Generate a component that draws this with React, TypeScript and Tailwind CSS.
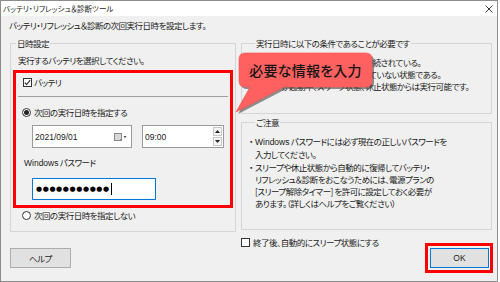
import React from "react";

const jp = "font-['Meiryo_UI','Noto_Sans_CJK_JP',sans-serif] [font-feature-settings:'palt']";
const latin = "font-['Liberation_Sans',Arial,sans-serif] tracking-normal";

function CheckBox({ checked }: { checked?: boolean }) {
  return (
    <span className="w-[9px] h-[9px] border border-[#333] bg-white flex items-center justify-center shrink-0">
      {checked && (
        <svg width="7" height="7" viewBox="0 0 7 7">
          <path d="M0.8 3.6 L2.7 5.5 L6.2 1.2" fill="none" stroke="#222" strokeWidth="1.1" />
        </svg>
      )}
    </span>
  );
}

function Radio({ checked }: { checked?: boolean }) {
  return (
    <span className="w-[9px] h-[9px] rounded-full border border-[#333] bg-white flex items-center justify-center shrink-0">
      {checked && <span className="w-[5px] h-[5px] rounded-full bg-[#222]" />}
    </span>
  );
}

function Callout() {
  const d =
    "M11,3 H132 Q138,3 138,9 V31 Q138,37 132,37 H50 L2,62 L16,37 H11 Q5,37 5,31 V9 Q5,3 11,3 Z";
  return (
    <div className="absolute left-[234px] top-[50px] w-[142px] h-[66px]">
      <svg width="142" height="66" viewBox="0 0 142 66" className="absolute inset-0">
        <path d={d} fill="#3a3a3a" opacity="0.55" transform="translate(2,2)" />
        <path d={d} fill="#ff6161" stroke="#f25252" strokeWidth="0.6" />
      </svg>
      <div
        className={`absolute left-[5px] top-[3px] w-[133px] h-[34px] flex items-center justify-center text-[14px] font-medium text-[#151515] tracking-[0.2px] ${jp}`}
      >
        必要な情報を入力
      </div>
    </div>
  );
}

export default function App() {
  return (
    <div className="relative w-[500px] h-[282px] bg-white">
      <div className={`w-[498px] h-[282px] border border-[#8c8c8c] bg-[#f0f0f0] text-[#1a1a1a] text-[8.5px] leading-[12px] tracking-[-0.5px] ${jp}`}>
        {/* Title bar */}
        <div className="h-[15px] bg-white flex items-center justify-between pl-[2px] pr-[4px]">
          <span className="text-[7.5px] leading-[10px] tracking-normal text-[#222]">バッテリ・リフレッシュ＆診断ツール</span>
          <svg width="8" height="8" viewBox="0 0 8 8">
            <path d="M0.5 0.5 L7.5 7.5 M7.5 0.5 L0.5 7.5" stroke="#333" strokeWidth="1" />
          </svg>
        </div>

        <div className="h-[18px] flex items-center pl-[8px] text-[8.5px]">
          バッテリ・リフレッシュ＆診断の次回実行日時を設定します。
        </div>

        <div className="flex mt-[3px] ml-[9px] gap-[7px]">
          {/* Left column */}
          <div className="flex flex-col w-[224px]">
            <fieldset className="border border-[#d5d5d5] h-[195px] px-[2px]">
              <legend className="ml-[3px] px-[1px]">日時設定</legend>
              <div className="pt-[5px] pl-[5px]">実行するバッテリを選択してください。</div>
              <div className="mt-[4px] w-[220px] border-[3px] border-[#ff0000] pt-[3px] pb-[5px]">
                <div className="flex items-center h-[12px] ml-[7px] gap-[2px]">
                  <CheckBox checked />
                  <span>バッテリ</span>
                </div>
                <div className="mt-[8px] ml-[2px] w-[210px] h-px bg-[#a0a0a0]" />
                <div className="flex items-center h-[12px] mt-[9px] ml-[6px] gap-[3px]">
                  <Radio checked />
                  <span>次回の実行日時を指定する</span>
                </div>
                <div className="flex mt-[7px] ml-[16px] gap-[10px]">
                  <div className="w-[100px] h-[23px] bg-white border border-[#9a9a9a] flex items-center justify-between pl-[2px] pr-[4px]">
                    <span className={`${latin} text-[8.5px]`}>2021/09/01</span>
                    <svg width="13" height="8" viewBox="0 0 13 8">
                      <rect x="0.5" y="0.5" width="7" height="7" fill="#d8d8d8" stroke="#8a8a8a" strokeWidth="1" />
                      <path d="M5.5 7.5 L7.5 5.5" stroke="#8a8a8a" strokeWidth="1" />
                      <path d="M9.5 3 L12.5 3 L11 5 Z" fill="#404a60" />
                    </svg>
                  </div>
                  <div className="w-[82px] h-[23px] bg-white border border-[#9a9a9a] flex items-center justify-between pl-[2px] pr-px">
                    <span className={`${latin} text-[8.5px]`}>09:00</span>
                    <div className="flex flex-col gap-px">
                      <div className="w-[9px] h-[9px] border border-[#c8c8c8] bg-[#f4f4f4] flex items-center justify-center">
                        <svg width="5" height="3" viewBox="0 0 5 3"><path d="M0 3 L2.5 0 L5 3 Z" fill="#222" /></svg>
                      </div>
                      <div className="w-[9px] h-[9px] border border-[#c8c8c8] bg-[#f4f4f4] flex items-center justify-center">
                        <svg width="5" height="3" viewBox="0 0 5 3"><path d="M0 0 L2.5 3 L5 0 Z" fill="#222" /></svg>
                      </div>
                    </div>
                  </div>
                </div>
                <div className="h-[12px] mt-[8px] ml-[8px]">
                  <span className={latin}>Windows</span> パスワード
                </div>
                <div className="mt-[10px] ml-[16px] w-[124px] h-[22px] bg-white border border-[#0078d7] flex items-center pl-[3px]">
                  <span className="font-['DejaVu_Sans',sans-serif] text-[7px] tracking-[0.6px] text-black">●●●●●●●●●●●</span>
                  <span className="w-px h-[12px] bg-black ml-px" />
                </div>
              </div>
              <div className="flex items-center h-[12px] mt-px ml-[9px] gap-[3px]">
                <Radio />
                <span>次回の実行日時を指定しない</span>
              </div>
            </fieldset>
            <button className="mt-[16px] w-[61px] h-[20px] bg-[#e1e1e1] border border-[#adadad] flex items-center justify-center text-[8.5px]">
              ヘルプ
            </button>
          </div>

          {/* Right column */}
          <div className="flex flex-col w-[251px]">
            <fieldset className="border border-[#d5d5d5] h-[77px] pl-[7px]">
              <legend className="ml-[6px] px-[1px]">実行日時に以下の条件であることが必要です</legend>
              <div className="pt-[7px] whitespace-nowrap">
                <div>・AC アダプターがパソコンに正しく接続されている。</div>
                <div>・すべてのアプリケーションが起動していない状態である。</div>
                <div>・パソコンが起動中、スリープ状態、休止状態からは実行可能です。</div>
              </div>
            </fieldset>
            <fieldset className="mt-[2px] border border-[#d5d5d5] h-[114px] pl-[7px]">
              <legend className="ml-[6px] px-[1px]">ご注意</legend>
              <div className="pt-[7px] leading-[12.3px]">
                <div className="flex">
                  <span className="w-[6px] shrink-0">・</span>
                  <span>
                    <span className={latin}>Windows</span> パスワードには必ず現在の正しいパスワードを
                    <br />
                    入力してください。
                  </span>
                </div>
                <div className="flex">
                  <span className="w-[6px] shrink-0">・</span>
                  <span>
                    スリープや休止状態から自動的に復帰してバッテリ・
                    <br />
                    リフレッシュ＆診断をおこなうためには、電源プランの
                    <br />
                    [スリープ解除タイマー] を許可に設定しておく必要が
                    <br />
                    あります。（詳しくはヘルプをご覧ください）
                  </span>
                </div>
              </div>
            </fieldset>
            <div className="flex items-start mt-[6px]">
              <div className="flex items-center h-[12px] gap-[3px]">
                <CheckBox />
                <span>終了後、自動的にスリープ状態にする</span>
              </div>
              <div className="ml-auto -mr-px mt-[7px] w-[68px] h-[30px] border-[3px] border-[#ff0000] pl-[2px] pt-[2px]">
                <button className={`w-[59px] h-[20px] bg-[#e1e1e1] border border-[#0078d7] flex items-center justify-center ${latin} text-[8.5px]`}>
                  OK
                </button>
              </div>
            </div>
          </div>
        </div>
      </div>
      <Callout />
    </div>
  );
}
